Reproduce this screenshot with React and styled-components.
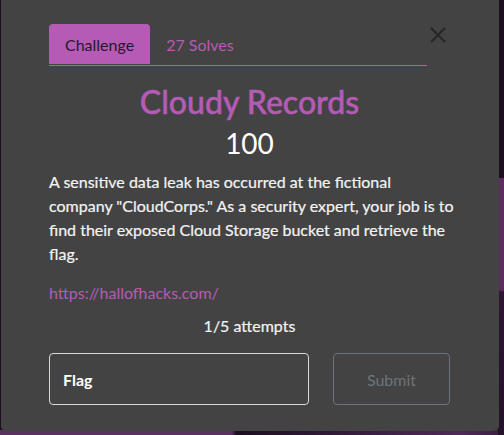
import React from "react";
import styled, { createGlobalStyle } from "styled-components";

const GlobalStyle = createGlobalStyle`
  body {
    margin: 0;
    font-family: Lato, "Open Sans", sans-serif;
  }
`;

const Page = styled.div`
  position: relative;
  width: 504px;
  height: 435px;
  overflow: hidden;
  background:
    linear-gradient(to bottom, #1b0e1e 0, #1b0e1e 178px, #5c2e5e 178px, #5c2e5e 290px, #2c1630 292px, #241228 435px) right / 6px 100% no-repeat,
    linear-gradient(to right, #5a3260 0, #5a3260 232px, #1c0f20 236px, #2a1630 300px, #4f2a58 460px, #3a1e40 504px) bottom / 100% 5px no-repeat,
    #1b0e1e;
`;

const Modal = styled.div`
  width: 498px;
  height: 431px;
  margin-left: 1px;
  box-sizing: border-box;
  padding: 24px 49px 0 48px;
  background: #434343;
  border-radius: 0 0 5px 5px;
  display: flex;
  flex-direction: column;
  color: #ececec;
`;

const Header = styled.div`
  display: flex;
  align-items: flex-start;
`;

const Tabs = styled.nav`
  width: 378px;
  flex-shrink: 0;
  display: flex;
  align-items: flex-end;
  border-bottom: 1px solid #b55bb5;
`;

const Tab = styled.button`
  height: 40px;
  padding: 0 16px;
  margin-bottom: 1px;
  border: none;
  border-radius: 4px 4px 0 0;
  font-family: inherit;
  font-size: 16px;
  background: ${(p) => (p.active ? "#b55bb5" : "transparent")};
  color: ${(p) => (p.active ? "#2b1530" : "#b55bb5")};
`;

const Close = styled.button`
  margin: 1px 2px 0 auto;
  width: 20px;
  height: 20px;
  padding: 0;
  border: none;
  background: none;
  display: flex;
  align-items: center;
  justify-content: center;
`;

const Title = styled.h2`
  margin: 17px 0 0;
  text-align: center;
  font-size: 32px;
  font-weight: 500;
  color: #b55bb5;
  -webkit-text-stroke: 0.5px #b55bb5;
  line-height: 38px;
`;

const Points = styled.div`
  margin-top: 5px;
  text-align: center;
  font-size: 28px;
  color: #ffffff;
  line-height: 34px;
`;

const Description = styled.p`
  margin: 10px -4px 0 0;
  font-size: 16px;
  line-height: 24px;
  color: #f3f3f3;
  -webkit-text-stroke: 0.2px #f3f3f3;
`;

const Link = styled.a`
  margin-top: 15px;
  font-size: 16px;
  line-height: 24px;
  color: #b55bb5;
  text-decoration: none;
`;

const Attempts = styled.div`
  margin-top: 9px;
  text-align: center;
  font-size: 16px;
  line-height: 24px;
  color: #f3f3f3;
  -webkit-text-stroke: 0.2px #f3f3f3;
`;

const Form = styled.form`
  margin-top: 15px;
  display: flex;
  gap: 24px;
`;

const FlagInput = styled.input`
  width: 260px;
  height: 52px;
  box-sizing: border-box;
  padding: 0 13px;
  border: 1px solid #d8d8d8;
  border-radius: 4px;
  background: transparent;
  font-family: inherit;
  font-size: 16px;
  font-weight: 700;
  color: #ffffff;
  &::placeholder {
    color: #ffffff;
  }
`;

const Submit = styled.button`
  flex: 1;
  height: 52px;
  border: 1px solid #6c737a;
  border-radius: 4px;
  background: transparent;
  font-family: inherit;
  font-size: 16px;
  color: #6c737a;
`;

export default function App() {
  return (
    <Page>
      <GlobalStyle />
      <Modal>
        <Header>
          <Tabs>
            <Tab active>Challenge</Tab>
            <Tab>27 Solves</Tab>
          </Tabs>
          <Close aria-label="Close">
            <svg width="16" height="16" viewBox="0 0 16 16">
              <path d="M1 1L15 15M15 1L1 15" stroke="#262626" strokeWidth="2" />
            </svg>
          </Close>
        </Header>
        <Title>Cloudy Records</Title>
        <Points>100</Points>
        <Description>
          A sensitive data leak has occurred at the fictional company "CloudCorps." As a security
          expert, your job is to find their exposed Cloud Storage bucket and retrieve the flag.
        </Description>
        <Link href="#">https://hallofhacks.com/</Link>
        <Attempts>1/5 attempts</Attempts>
        <Form onSubmit={(e) => e.preventDefault()}>
          <FlagInput placeholder="Flag" />
          <Submit type="submit">Submit</Submit>
        </Form>
      </Modal>
    </Page>
  );
}
